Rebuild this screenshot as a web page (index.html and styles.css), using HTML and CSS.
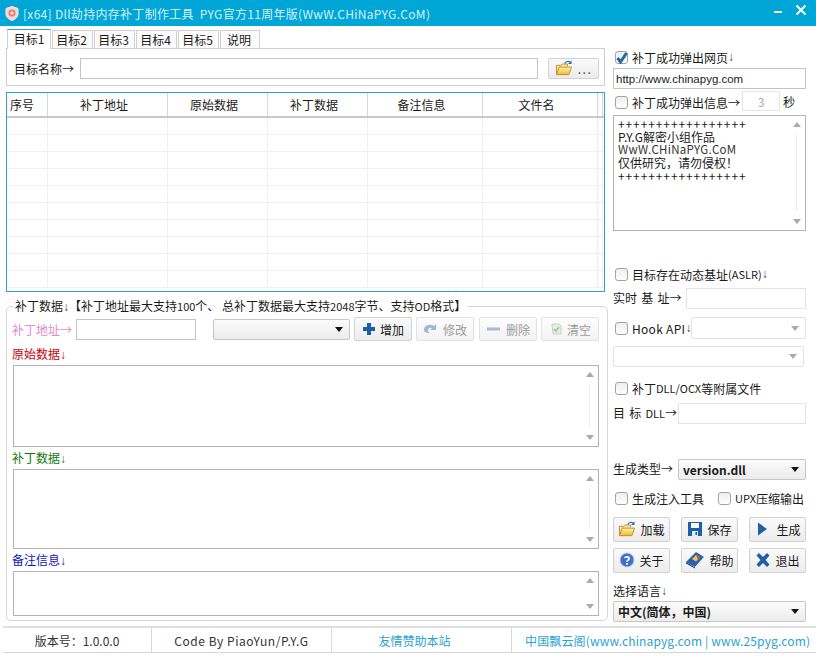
FILE: index.html
```html
<!DOCTYPE html>
<html lang="zh">
<head>
<meta charset="utf-8">
<title>Dll劫持内存补丁制作工具</title>
<link rel="stylesheet" href="styles.css">
</head>
<body>
<svg class="defs" width="0" height="0" aria-hidden="true">
  <defs>
    <linearGradient id="fold" x1="0" y1="0" x2="0" y2="1"><stop offset="0" stop-color="#fff3b0"/><stop offset="1" stop-color="#f2b92e"/></linearGradient>
    <symbol id="i-folder" viewBox="0 0 20 18">
      <path d="M1.5 15.5V6h5l1.5-1.5h6V7" fill="#fbe7a0" stroke="#b98a1c"/>
      <path d="M1.5 16.5 4.5 8h14l-3 8.500z" fill="url(#fold)" stroke="#b98a1c" stroke-linejoin="round"/>
      <path d="M11 4C12 1.500 15 .8 17 2.500" fill="none" stroke="#2f6fa8" stroke-width="1.400"/>
      <path d="M18.500 .5v4h-4z" fill="#2f6fa8"/>
    </symbol>
  </defs>
</svg>
<div class="app">
  <header class="titlebar">
    <svg class="logo" viewBox="0 0 14 15"><path d="M7 .5 13 2.500V8c0 3-3 5.500-6 6.500C4 13.500 1 11 1 8V2.500z" fill="#f8d3ce" stroke="#fdeeee"/><circle cx="7" cy="7" r="3.500" fill="#e27f76"/><circle cx="7" cy="7" r="1.600" fill="#fbe6e2"/></svg>
    <span class="title">[x64] Dll劫持内存补丁制作工具&nbsp; PYG官方11周年版(WwW.CHiNaPYG.CoM)</span>
    <span class="winbtns">
      <svg class="winicon" viewBox="0 0 12 12"><path d="M0 8h8" stroke="#fff" stroke-width="2"/></svg>
      <svg class="winicon" viewBox="0 0 12 12"><path d="M1.500 1.500l9 9m0-9l-9 9" stroke="#fff" stroke-width="2"/></svg>
    </span>
  </header>

  <main class="main">
    <section class="left">
      <nav class="tabs">
        <span class="tab active">目标1</span>
        <span class="tab">目标2</span>
        <span class="tab">目标3</span>
        <span class="tab">目标4</span>
        <span class="tab">目标5</span>
        <span class="tab wide">说明</span>
      </nav>
      <div class="panel">
        <label class="lbl">目标名称→</label>
        <input class="input name" type="text">
        <button class="btn browse"><svg class="ico folder"><use href="#i-folder"/></svg><span class="dots">...</span></button>
      </div>

      <div class="tablewrap">
        <table class="grid">
          <colgroup><col class="c1"><col class="c2"><col class="c3"><col class="c3"><col class="c4"><col class="c4"><col class="c5"><col></colgroup>
          <thead><tr><th class="first">序号</th><th>补丁地址</th><th>原始数据</th><th>补丁数据</th><th>备注信息</th><th>文件名</th><th></th><th></th></tr></thead>
          <tbody>
            <tr><td></td><td></td><td></td><td></td><td></td><td></td><td></td><td></td></tr>
            <tr><td></td><td></td><td></td><td></td><td></td><td></td><td></td><td></td></tr>
            <tr><td></td><td></td><td></td><td></td><td></td><td></td><td></td><td></td></tr>
            <tr><td></td><td></td><td></td><td></td><td></td><td></td><td></td><td></td></tr>
            <tr><td></td><td></td><td></td><td></td><td></td><td></td><td></td><td></td></tr>
            <tr><td></td><td></td><td></td><td></td><td></td><td></td><td></td><td></td></tr>
            <tr><td></td><td></td><td></td><td></td><td></td><td></td><td></td><td></td></tr>
            <tr><td></td><td></td><td></td><td></td><td></td><td></td><td></td><td></td></tr>
            <tr><td></td><td></td><td></td><td></td><td></td><td></td><td></td><td></td></tr>
            <tr><td></td><td></td><td></td><td></td><td></td><td></td><td></td><td></td></tr>
          </tbody>
        </table>
      </div>

      <fieldset class="group">
        <legend class="legend">补丁数据<span class="ar">↓</span>【补丁地址最大支持<span class="sm">100</span>个、 总补丁数据最大支持<span class="sm">2048</span>字节、支持<span class="sm">OD</span>格式】</legend>
        <div class="addr">
          <label class="lbl pink">补丁地址→</label>
          <input class="input addrinput" type="text">
          <div class="select addrsel"><span></span><i class="caret"></i></div>
          <button class="btn act"><svg class="ico" viewBox="0 0 14 14"><path d="M5 1h4v4h4v4H9v4H5V9H1V5h4z" fill="#1d5fa8"/></svg><span>增加</span></button>
          <button class="btn act off"><svg class="ico wide16" viewBox="0 0 16 14"><path d="M1 8a6 5 0 0 1 10-4l2-2v6H7l2-2A3 3 0 0 0 5 8c0 1.500 1 2.500 2 3-3 .5-6-1-6-3z" fill="#9db8d2"/></svg><span>修改</span></button>
          <button class="btn act off"><svg class="ico wide16" viewBox="0 0 16 14"><path d="M1 5.500h13v3H1z" fill="#a5bbd6"/></svg><span>删除</span></button>
          <button class="btn act off"><svg class="ico" viewBox="0 0 14 14"><path d="M3 2h7l2 2v8H4z" fill="#e8eee4" stroke="#c9d2c4"/><path d="M5 7l2 2 3-4" fill="none" stroke="#9fd09a" stroke-width="2"/></svg><span>清空</span></button>
        </div>
        <div class="cap red">原始数据<span class="ar">↓</span></div>
        <div class="memo h1"><div class="memotext"></div><div class="bar"><i class="up"></i><b></b><i class="down"></i></div></div>
        <div class="cap green">补丁数据<span class="ar">↓</span></div>
        <div class="memo h2"><div class="memotext"></div><div class="bar"><i class="up"></i><b></b><i class="down"></i></div></div>
        <div class="cap blue">备注信息<span class="ar">↓</span></div>
        <div class="memo h3"><div class="memotext"></div><div class="bar"><i class="up"></i><i class="down"></i></div></div>
      </fieldset>
    </section>

    <aside class="right">
      <label class="row h20"><span class="cb on"><svg viewBox="0 0 14 14"><path d="M2.500 7l3 4 6-9" fill="none" stroke="#1f6aa5" stroke-width="3"/></svg></span>补丁成功弹出网页<span class="ar">↓</span></label>
      <input class="input full url" type="text" value="http://www.chinapyg.com">
      <div class="row h20 m2"><label class="row drop"><span class="cb"></span>补丁成功弹出信息→</label><input class="input num" type="text" value="3"><span class="sec">秒</span></div>
      <div class="memo info">
        <div class="memotext infotext"><div class="plus">+++++++++++++++++</div><div>P.Y.G解密小组作品</div><div class="site">WwW.CHiNaPYG.CoM</div><div>仅供研究，请勿侵权！</div><div class="plus">+++++++++++++++++</div></div>
        <div class="bar"><i class="up"></i><b></b><i class="down"></i></div>
      </div>
      <label class="row h20 m33"><span class="cb"></span>目标存在动态基址<span class="sm">(ASLR)</span><span class="ar">↓</span></label>
      <div class="row h21 m4 between"><span class="spaced lift">实时 基 址→</span><input class="input w120" type="text"></div>
      <div class="row h22 m8 between"><label class="row"><span class="cb"></span><span class="hook">Hook API</span><span class="ar">↓</span></label><div class="select w120 dis"><span></span><i class="caret"></i></div></div>
      <div class="select w191 m7 dis h21"><span></span><i class="caret"></i></div>
      <label class="row h20 m12 lift"><span class="cb"></span>补丁<span class="sm">DLL/OCX</span>等附属文件</label>
      <div class="row h21 m4 between"><span class="spaced lift">目 标 <span class="sm">DLL</span>→</span><input class="input w128" type="text"></div>
      <div class="row h21 m35 between"><span class="lift">生成类型→</span><div class="select w128 bold"><span>version.dll</span><i class="caret"></i></div></div>
      <div class="row h20 m8 between"><label class="row"><span class="cb"></span>生成注入工具</label><label class="row upx"><span class="cb"></span><span class="sm">UPX</span>压缩输出</label></div>
      <div class="btnrow m9">
        <button class="btn big"><svg class="ico folder"><use href="#i-folder"/></svg><span>加载</span></button>
        <button class="btn big"><svg class="ico s16" viewBox="0 0 16 16"><path d="M1 1h14v14H1z" fill="#1d5fa8"/><path d="M4 2h8v5H4z" fill="#fff"/><path d="M5 10h6v5H5z" fill="#dfe9f3"/><path d="M8.500 11h1.500v3H8.500z" fill="#1d5fa8"/></svg><span>保存</span></button>
        <button class="btn big playbtn"><svg class="ico s16" viewBox="0 0 14 16"><path d="M3 1.500 12 8l-9 6.500z" fill="#1d5fa8"/></svg><span>生成</span></button>
      </div>
      <div class="btnrow m6">
        <button class="btn big"><svg class="ico s16" viewBox="0 0 16 16"><circle cx="8" cy="8" r="7" fill="#3f72c4" stroke="#b9cdea"/><path d="M5.800 6.200C6 4.500 10.200 4.300 10.200 6.500 10.200 8 8 8 8 9.800" fill="none" stroke="#fff" stroke-width="1.700"/><path d="M7.100 11h1.800v1.800H7.100z" fill="#fff"/></svg><span>关于</span></button>
        <button class="btn big"><svg class="ico bookico" viewBox="0 0 20 18"><path d="M1 11 11 1l8 5-9 10z" fill="#2a63ad"/><path d="M1 11l9 5.500v1L1 12.500z" fill="#153f78"/><path d="M7 8l4-4 4 2.500-4 4z" fill="#f1c24a"/><path d="M11 4l4 2.500-2 2z" fill="#d8483c"/><path d="M10 16l9-10v1.500L10 17.500z" fill="#e5edf6"/></svg><span>帮助</span></button>
        <button class="btn big"><svg class="ico s16" viewBox="0 0 16 16"><path d="M1.500 3.500 4 1l4 4 4-4 2.500 2.500-4 4.500 4 4.500L12 15l-4-4-4 4-2.500-2.500 4-4.500z" fill="#1d5fa8"/></svg><span>退出</span></button>
      </div>
      <div class="row lang">选择语言<span class="ar">↓</span></div>
      <div class="select full bold langsel"><span>中文(简体，中国)</span><i class="caret"></i></div>
    </aside>
  </main>

  <footer class="status">
    <span class="cell c-ver">版本号：1.0.0.0</span>
    <span class="cell c-code">Code By PiaoYun/P.Y.G</span>
    <span class="cell c-link">友情赞助本站</span>
    <span class="cell c-site">中国飘云阁(www.chinapyg.com | www.25pyg.com)</span>
  </footer>
</div>
</body>
</html>
```
FILE: styles.css
```css
* { box-sizing: border-box; }
html, body { margin: 0; padding: 0; background: #fff; }
body {
  font-family: "Noto Sans CJK SC", "Noto Sans", sans-serif;
  font-size: 12px;
  color: #1a1a1a;
}
.defs { position: absolute; }
.app { width: 816px; height: 656px; overflow: hidden; background: #fff; }
.ar { font-family: "Liberation Sans", sans-serif; font-weight: normal; color: #444; }
.red .ar { color: #c8000a; }
.green .ar { color: #0c7a0c; }
.blue .ar { color: #1515c0; }

.titlebar {
  height: 26px;
  background: #00a6d6;
  display: flex;
  align-items: center;
  padding: 0 9px 0 5px;
  color: #d4f0f9;
}
.logo { width: 14px; height: 15px; margin-right: 4px; }
.title { letter-spacing: .3px; white-space: nowrap; flex: 1; }
.winbtns { display: flex; gap: 9px; margin-bottom: 6px; }
.winicon { width: 12px; height: 12px; }

.main { display: flex; height: 600px; gap: 9px; }
.left { width: 604px; padding: 3px 0 0 6px; flex: none; }
.right { width: 193px; padding-top: 21px; flex: none; }

.tabs { display: flex; height: 19px; padding-left: 1px; }
.tab {
  width: 41px;
  height: 18px;
  margin-top: 1px;
  margin-right: 1px;
  padding-right: 2px;
  border: 1px solid #d0d0d0;
  border-bottom: none;
  background: #fbfbfb;
  line-height: 17px;
  text-align: center;
}
.tab.active { width: 44px; height: 20px; margin-top: 0; padding-right: 0; border-top: 1px solid #2aa0cc; background: #fff; position: relative; z-index: 1; }
.tab.wide { width: 40px; }

.panel {
  height: 38px;
  border: 1px solid #cfcfcf;
  display: flex;
  align-items: center;
  padding: 2px 5px 0 7px;
  width: 599px;
}
.lbl { width: 66px; flex: none; white-space: nowrap; }
.input {
  display: block;
  height: 21px;
  border: 1px solid #c4c4c4;
  background: #fff;
  padding: 0 2px;
  font: inherit;
  color: #222;
  outline: none;
}
.name { width: 458px; }
.btn {
  display: inline-flex;
  align-items: center;
  justify-content: center;
  gap: 4px;
  border: 1px solid #d2d2d2;
  border-radius: 2px;
  background: linear-gradient(#fafafa, #ececec);
  font: inherit;
  color: #1a1a1a;
  padding: 0;
}
.browse { width: 51px; height: 21px; margin-left: 10px; gap: 5px; }
.dots { letter-spacing: 1.500px; color: #444; }
.ico { width: 14px; height: 14px; flex: none; }
.s16 { width: 16px; height: 16px; }
.wide16 { width: 16px; }
.folder { width: 18px; height: 16px; }
.bookico { width: 20px; height: 18px; }
.playbtn { gap: 6px; }

.tablewrap {
  margin-top: 6px;
  width: 599px;
  height: 200px;
  border: 1px solid #2ea2c9;
  overflow: hidden;
}
.grid { border-collapse: collapse; table-layout: fixed; width: 597px; }
.c1 { width: 40px; } .c2 { width: 120px; } .c3 { width: 100px; } .c4 { width: 115px; } .c5 { width: 5px; }
.grid th {
  height: 24px;
  padding: 0 6px 0 0;
  font-weight: normal;
  border-right: 1px solid #d6d6d6;
  border-bottom: 2px solid #c9c9c9;
}
.grid th.first { text-align: left; padding-left: 3px; }
.grid td { height: 17px; padding: 0; border-right: 1px solid #f0f0f0; border-bottom: 1px solid #f0f0f0; }
.grid th:last-child, .grid td:last-child { border-right: none; }

.group {
  margin: 5px 0 0;
  width: 598px;
  padding: 1px 4px 0 5px;
  border: 1px solid #d6d6d6;
  border-radius: 5px;
  height: 324px;
}
.legend { padding: 0 2px; margin-left: 1px; line-height: 18px; white-space: nowrap; }
.sm { font-size: 11px; }

.addr { display: flex; align-items: center; height: 24px; }
.pink { color: #e48ac6; width: 64px; }
.addrinput { width: 120px; }
.select {
  display: flex;
  align-items: center;
  justify-content: space-between;
  height: 21px;
  border: 1px solid #c6c6c6;
  border-radius: 2px;
  background: linear-gradient(#fbfbfb, #ececec);
  padding: 0 6px 0 4px;
}
.caret { width: 0; height: 0; border: 4px solid transparent; border-top: 5px solid #111; border-bottom: none; }
.addrsel { width: 137px; margin: 0 4px 0 17px; }
.act { width: 58px; height: 24px; margin-right: 4px; }
.act:nth-of-type(2) { margin-right: 5px; }
.off { color: #9c9c9c; border-color: #e2e2e2; background: linear-gradient(#fdfdfd, #f3f3f3); }

.cap { height: 18px; line-height: 18px; margin-top: 4px; }
.cap + .memo { margin-left: 1px; }
.memo ~ .cap { margin-top: 2px; }
.red { color: #c8000a; }
.green { color: #0c7a0c; }
.blue { color: #1515c0; }

.memo { display: flex; border: 1px solid #b4b4b4; margin-top: 2px; background: #fff; }
.memo.h1 { height: 82px; width: 586px; }
.memo.h2 { height: 80px; width: 586px; }
.memo.h3 { height: 45px; width: 586px; }
.memotext { flex: 1; }
.bar { width: 17px; display: flex; flex-direction: column; align-items: center; justify-content: space-between; padding: 6px 0 6px; flex: none; }
.bar b { flex: 1; width: 1px; background: #ececec; margin: 8px 0; }
.up { width: 0; height: 0; border: 4.500px solid transparent; border-bottom: 5px solid #aaa; border-top: none; }
.down { width: 0; height: 0; border: 4.500px solid transparent; border-top: 5px solid #aaa; border-bottom: none; }

.row { display: flex; align-items: center; white-space: nowrap; }
.h20 { height: 20px; } .h21 { height: 21px; } .h22 { height: 22px; }
.between { justify-content: space-between; }
.m2 { margin-top: 2px; } .m4 { margin-top: 4px; } .m6 { margin-top: 6px; } .m7 { margin-top: 7px; }
.m8 { margin-top: 8px; } .m9 { margin-top: 9px; } .m12 { margin-top: 12px; } .m33 { margin-top: 33px; } .m35 { margin-top: 35px; }
.lift { margin-bottom: 2px; }
.h20.lift { margin-bottom: 0; padding-bottom: 2px; }
.drop { padding-top: 3px; }
.cb {
  display: inline-block;
  width: 13px;
  height: 13px;
  border: 1px solid #a3a3a3;
  border-radius: 3px;
  background: linear-gradient(#eeeeee, #ffffff);
  margin: 0 4px 0 2px;
  flex: none;
}
.cb svg { display: block; width: 14px; height: 14px; margin: -1px 0 0 -1px; }
.full { width: 193px; }
.url { margin-top: 1px; font-family: "Liberation Sans", sans-serif; font-size: 11.500px; }
.num { width: 38px; height: 20px; margin-left: 2px; text-align: center; border-color: #e6e6e6; color: #aaa; }
.sec { margin-left: 3px; }
.info { height: 116px; margin-top: 4px; width: 193px; }
.infotext { padding: 1px 0 0 4px; line-height: 13px; }
.plus { letter-spacing: .9px; }
.site { font-size: 11.500px; color: #333; letter-spacing: .3px; }
.spaced { word-spacing: 1.500px; }
.w120 { width: 120px; } .w128 { width: 128px; } .w191 { width: 191px; }
.right .input.w120, .right .input.w128 { border-color: #e4e4e4; }
.dis { background: #fff; border-color: #e2e2e2; }
.dis .caret { border-top-color: #aaa; }
.hook { letter-spacing: .3px; }
.h22 .select { height: 22px; }
.h21.select { height: 21px; }
.bold { font-weight: 700; }
.btnrow { display: flex; justify-content: space-between; }
.big { width: 57px; height: 25px; padding-bottom: 1px; }
.lang { height: 19px; margin-top: 8px; }
.langsel { margin-top: 1px; }
.upx { margin-right: 2px; }

.status {
  display: flex;
  height: 27px;
  margin-left: 3px;
  border-top: 2px solid #dedede;
  border-bottom: 1px solid #d8d8d8;
}
.cell { display: flex; align-items: center; justify-content: center; white-space: nowrap; border-right: 1px solid #d8d8d8; }
.c-ver { width: 149px; color: #333; }
.c-code { width: 180px; color: #333; letter-spacing: .55px; }
.c-link { width: 180px; color: #2aa4cf; padding-right: 14px; }
.c-site { flex: 1; border-right: none; color: #2aa4cf; justify-content: flex-start; padding-left: 13px; letter-spacing: .14px; }
```
